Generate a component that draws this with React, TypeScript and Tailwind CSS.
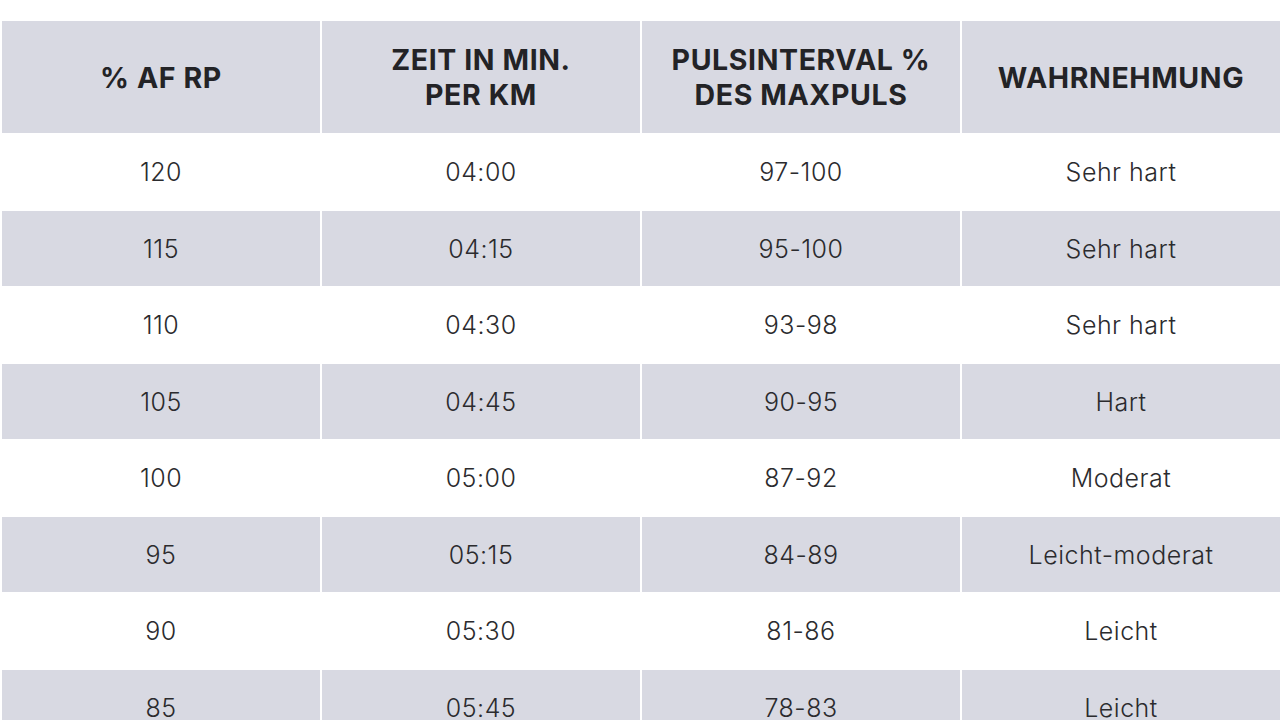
const headers = ["% AF RP", "ZEIT IN MIN.\nPER KM", "PULSINTERVAL %\nDES MAXPULS", "WAHRNEHMUNG"];

const rows = [
  ["120", "04:00", "97-100", "Sehr hart"],
  ["115", "04:15", "95-100", "Sehr hart"],
  ["110", "04:30", "93-98", "Sehr hart"],
  ["105", "04:45", "90-95", "Hart"],
  ["100", "05:00", "87-92", "Moderat"],
  ["95", "05:15", "84-89", "Leicht-moderat"],
  ["90", "05:30", "81-86", "Leicht"],
  ["85", "05:45", "78-83", "Leicht"],
];

export default function App() {
  return (
    <div className="w-[1280px] h-[720px] overflow-hidden bg-white pt-[21px] pl-[2px] font-['Inter',sans-serif]">
      {/* Header */}
      <div className="grid grid-cols-4 gap-x-[2px] w-[1278px]">
        {headers.map((h) => (
          <div
            key={h}
            className="h-[112px] bg-[#d8d9e2] flex items-center justify-center text-center whitespace-pre-line text-[28.5px] leading-[35px] font-bold text-[#232326] tracking-[0.6px]"
          >
            {h}
          </div>
        ))}
      </div>

      {/* Body */}
      <div className="flex flex-col gap-y-[1.5px] mt-[1px] w-[1278px]">
        {rows.map((r, i) => (
          <div key={i} className="grid grid-cols-4 gap-x-[2px]">
            {r.map((c, j) => (
              <div
                key={j}
                className={`h-[75px] pt-[3px] flex items-center justify-center text-[25px] tracking-[0.5px] text-[#2b2b2e] font-light ${
                  i % 2 === 1 ? "bg-[#d8d9e2]" : "bg-white"
                }`}
              >
                {c}
              </div>
            ))}
          </div>
        ))}
      </div>
    </div>
  );
}
